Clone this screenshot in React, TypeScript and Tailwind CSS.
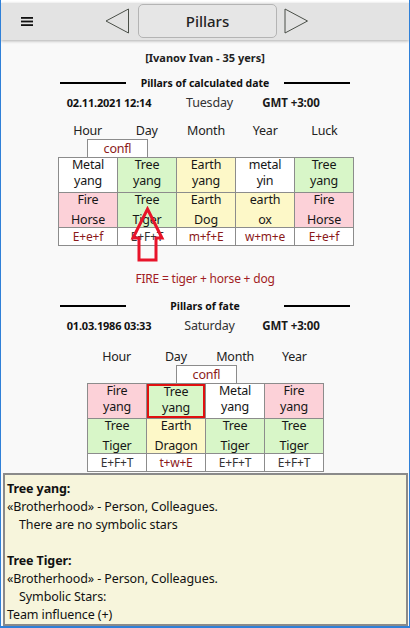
import React from "react";

type Cell = {
  top: string;
  bottom: string;
  bg: string;
  mark?: boolean;
};

const GREEN = "bg-[#d8f6c8]";
const YELLOW = "bg-[#fdf8c8]";
const PINK = "bg-[#fcd1d8]";
const WHITE = "bg-white";

const calcStems: Cell[] = [
  { top: "Metal", bottom: "yang", bg: WHITE },
  { top: "Tree", bottom: "yang", bg: GREEN },
  { top: "Earth", bottom: "yang", bg: YELLOW },
  { top: "metal", bottom: "yin", bg: WHITE },
  { top: "Tree", bottom: "yang", bg: GREEN },
];

const calcBranches: Cell[] = [
  { top: "Fire", bottom: "Horse", bg: PINK },
  { top: "Tree", bottom: "Tiger", bg: GREEN },
  { top: "Earth", bottom: "Dog", bg: YELLOW },
  { top: "earth", bottom: "ox", bg: YELLOW },
  { top: "Fire", bottom: "Horse", bg: PINK },
];

const calcHidden = [
  { text: "E+e+f", red: true },
  { text: "E+F+T", red: false },
  { text: "m+f+E", red: true },
  { text: "w+m+e", red: true },
  { text: "E+e+f", red: true },
];

const fateStems: Cell[] = [
  { top: "Fire", bottom: "yang", bg: PINK },
  { top: "Tree", bottom: "yang", bg: GREEN, mark: true },
  { top: "Metal", bottom: "yang", bg: WHITE },
  { top: "Fire", bottom: "yang", bg: PINK },
];

const fateBranches: Cell[] = [
  { top: "Tree", bottom: "Tiger", bg: GREEN },
  { top: "Earth", bottom: "Dragon", bg: YELLOW },
  { top: "Tree", bottom: "Tiger", bg: GREEN },
  { top: "Tree", bottom: "Tiger", bg: GREEN },
];

const fateHidden = [
  { text: "E+F+T", red: false },
  { text: "t+w+E", red: true },
  { text: "E+F+T", red: false },
  { text: "E+F+T", red: false },
];

function SectionTitle({ children }: { children: React.ReactNode }) {
  return (
    <div className="ml-[59px] grid h-[16px] w-[290px] grid-cols-[66px_1fr_66px] items-center">
      <div className="h-[2px] bg-black" />
      <div className="text-center text-[10.5px] font-bold leading-[16px] text-[#111]">
        {children}
      </div>
      <div className="h-[2px] bg-black" />
    </div>
  );
}

function DateRow({ date, day }: { date: string; day: string }) {
  return (
    <div className="ml-[58px] grid h-[16px] grid-cols-[100px_101px_62px] whitespace-nowrap leading-[16px]">
      <div className="flex justify-center text-[11px] font-bold tracking-[-0.2px] text-[#111]">
        {date}
      </div>
      <div className="flex justify-center text-[12.5px] tracking-[-0.2px] text-[#333]">
        {day}
      </div>
      <div className="flex justify-center text-[11.5px] font-bold tracking-[-0.1px] text-[#1a1a1a]">
        GMT +3:00
      </div>
    </div>
  );
}

function Labels({ items, cols }: { items: string[]; cols: string }) {
  return (
    <div
      className={`grid h-[16px] ${cols} text-[12.5px] leading-[16px] tracking-[-0.2px] text-[#222]`}
    >
      {items.map((l) => (
        <div key={l} className="text-center">
          {l}
        </div>
      ))}
    </div>
  );
}

function Confl({ offset }: { offset: string }) {
  return (
    <div
      className={`${offset} flex h-[18px] w-[61px] items-center justify-center border border-b-0 border-[#8c8c8c] bg-white text-[12.5px] leading-[16px] tracking-[-0.2px] text-[#8b1a1a]`}
    >
      confl
    </div>
  );
}

function PillarTable({
  stems,
  branches,
  hidden,
  cols,
}: {
  stems: Cell[];
  branches: Cell[];
  hidden: { text: string; red: boolean }[];
  cols: string;
}) {
  return (
    <div
      className={`grid ${cols} gap-px bg-[#8c8c8c] p-px text-[12.5px] tracking-[-0.2px] text-[#161616]`}
    >
      {stems.map((c, i) => (
        <div
          key={`s${i}`}
          className={`${c.bg} flex h-[34px] flex-col items-center justify-start leading-[16px] ${
            c.mark ? "border-2 border-[#e01010]" : ""
          }`}
        >
          <span className={c.mark ? "-mt-[2px]" : "-mt-[1px]"}>{c.top}</span>
          <span>{c.bottom}</span>
        </div>
      ))}
      {branches.map((c, i) => (
        <div
          key={`b${i}`}
          className={`${c.bg} flex h-[34px] flex-col items-center justify-center leading-[20px]`}
        >
          <span>{c.top}</span>
          <span>{c.bottom}</span>
        </div>
      ))}
      {hidden.map((h, i) => (
        <div
          key={`h${i}`}
          className={`flex h-[17px] items-center justify-center bg-white text-[12px] leading-[17px] ${
            h.red ? "text-[#8b1a1a]" : "text-[#333]"
          }`}
        >
          {h.text}
        </div>
      ))}
    </div>
  );
}

export default function App() {
  return (
    <div
      className="relative flex h-[628px] w-[410px] flex-col overflow-hidden border-x border-b-2 border-[#2f80d8] bg-[#f9f9f9]"
      style={{ fontFamily: '"Noto Sans", "Open Sans", sans-serif' }}
    >
      <div className="h-[3px] bg-white" />
      <header className="relative z-10 flex h-[39px] items-center bg-[#e3e3e3] shadow-[0_1px_3px_rgba(0,0,0,0.3)]">
        <svg className="ml-[20px]" width="12" height="9" viewBox="0 0 12 9">
          <rect x="0" y="0" width="12" height="1.8" fill="#111" />
          <rect x="0" y="3.6" width="12" height="1.8" fill="#111" />
          <rect x="0" y="7.2" width="12" height="1.8" fill="#111" />
        </svg>
        <svg className="ml-[72px]" width="25" height="26" viewBox="0 0 25 26">
          <polygon
            points="23.5,1 23.5,25 1,13"
            fill="none"
            stroke="#4a4f48"
            strokeWidth="1"
          />
        </svg>
        <button className="ml-[8px] flex h-[34px] w-[139px] items-center justify-center rounded-[5px] border border-[#b4b4b4] bg-[#e6e6e6] text-[15px] font-medium text-[#222]">
          Pillars
        </button>
        <svg className="ml-[7px]" width="25" height="26" viewBox="0 0 25 26">
          <polygon
            points="1,1 1,25 23.5,13"
            fill="none"
            stroke="#4a4f48"
            strokeWidth="1"
          />
        </svg>
      </header>

      <div className="mt-[10px] h-[16px] text-center text-[11px] font-bold leading-[16px] text-[#222]">
        [Ivanov Ivan - 35 yers]
      </div>

      <div className="mt-[9px]">
        <SectionTitle>Pillars of calculated date</SectionTitle>
      </div>
      <div className="mt-[4px]">
        <DateRow date="02.11.2021 12:14" day="Tuesday" />
      </div>

      <div className="ml-[57px] mt-[12px] w-[296px]">
        <Labels items={["Hour", "Day", "Month", "Year", "Luck"]} cols="grid-cols-5" />
        <Confl offset="ml-[29px]" />
        <PillarTable
          stems={calcStems}
          branches={calcBranches}
          hidden={calcHidden}
          cols="grid-cols-5"
        />
      </div>

      <div className="mt-[25px] h-[16px] text-center text-[12px] leading-[16px] tracking-[-0.2px] text-[#a11d24]">
        FIRE = tiger + horse + dog
      </div>

      <div className="mt-[11px]">
        <SectionTitle>Pillars of fate</SectionTitle>
      </div>
      <div className="mt-[4px]">
        <DateRow date="01.03.1986 03:33" day="Saturday" />
      </div>

      <div className="ml-[86px] mt-[15px] w-[237px]">
        <Labels items={["Hour", "Day", "Month", "Year"]} cols="grid-cols-4" />
        <Confl offset="ml-[89px]" />
        <PillarTable
          stems={fateStems}
          branches={fateBranches}
          hidden={fateHidden}
          cols="grid-cols-4"
        />
      </div>

      <div className="ml-[2px] mr-[1px] mt-[1px] flex-1 border-2 border-[#8a8a8a] bg-[#f7f5dc] pl-[2px] pt-[5px] text-[12.5px] leading-[18px] tracking-[-0.1px] text-[#111]">
        <div className="font-bold">Tree yang:</div>
        <div>«Brotherhood» - Person, Colleagues.</div>
        <div className="pl-[12px]">There are no symbolic stars</div>
        <div className="h-[18px]" />
        <div className="font-bold">Tree Tiger:</div>
        <div>«Brotherhood» - Person, Colleagues.</div>
        <div className="pl-[12px]">Symbolic Stars:</div>
        <div>Team influence (+)</div>
      </div>

      <svg
        className="pointer-events-none absolute left-[129px] top-[206px]"
        width="36"
        height="58"
        viewBox="0 0 36 58"
      >
        <polygon
          points="17.5,3 32,32 26,32 26,54 9,54 9,32 3,32"
          fill="none"
          stroke="#e8142a"
          strokeWidth="3"
          strokeLinejoin="miter"
        />
      </svg>
    </div>
  );
}
